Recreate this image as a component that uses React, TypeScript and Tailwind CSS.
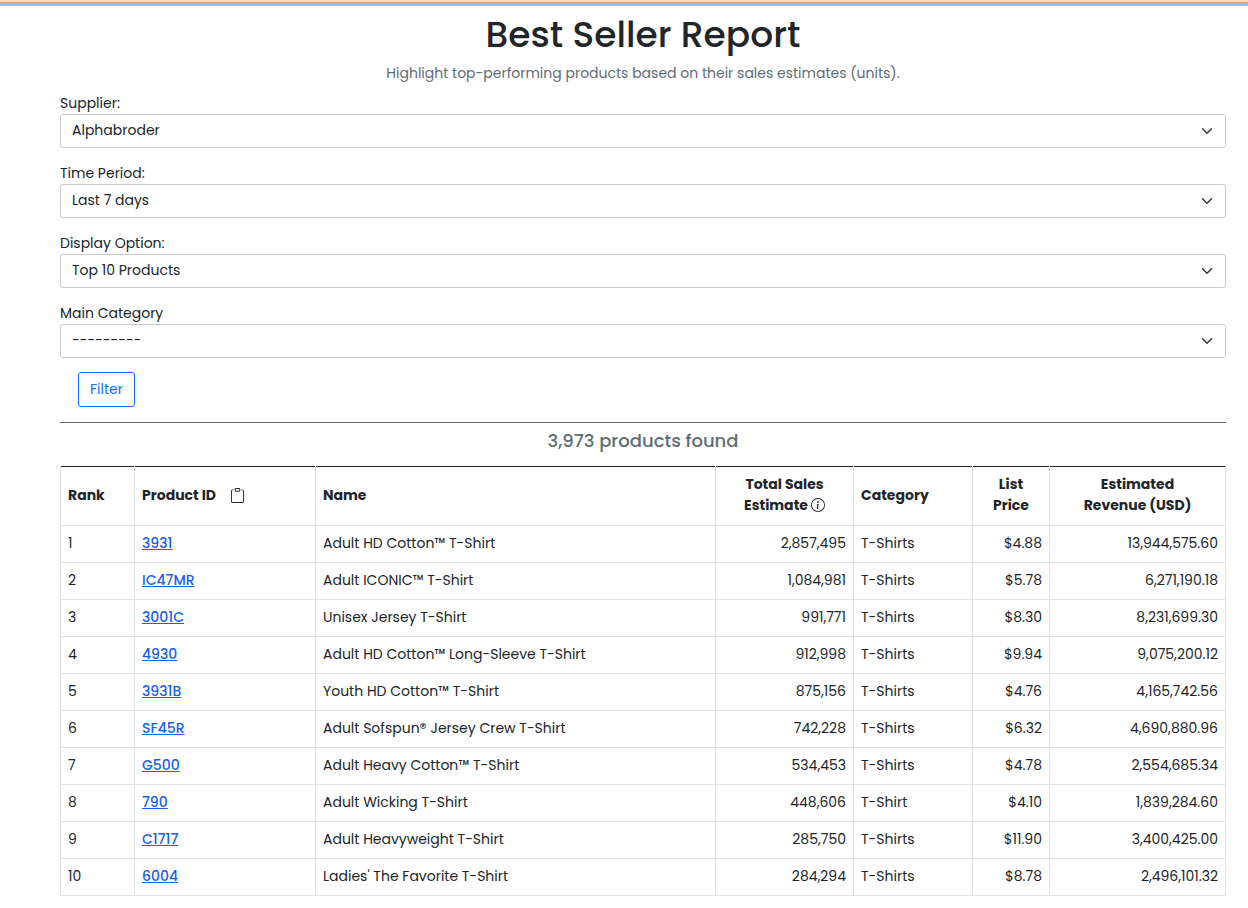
import { useState } from "react";
import { BsClipboard, BsInfoCircle } from "react-icons/bs";

interface Field {
  id: string;
  label: string;
  options: string[];
}

interface Product {
  id: string;
  name: string;
  sales: string;
  category: string;
  price: string;
  revenue: string;
}

const fields: Field[] = [
  { id: "supplier", label: "Supplier:", options: ["Alphabroder"] },
  { id: "period", label: "Time Period:", options: ["Last 7 days"] },
  { id: "display", label: "Display Option:", options: ["Top 10 Products"] },
  { id: "category", label: "Main Category", options: ["---------"] },
];

const products: Product[] = [
  { id: "3931", name: "Adult HD Cotton™ T-Shirt", sales: "2,857,495", category: "T-Shirts", price: "$4.88", revenue: "13,944,575.60" },
  { id: "IC47MR", name: "Adult ICONIC™ T-Shirt", sales: "1,084,981", category: "T-Shirts", price: "$5.78", revenue: "6,271,190.18" },
  { id: "3001C", name: "Unisex Jersey T-Shirt", sales: "991,771", category: "T-Shirts", price: "$8.30", revenue: "8,231,699.30" },
  { id: "4930", name: "Adult HD Cotton™ Long-Sleeve T-Shirt", sales: "912,998", category: "T-Shirts", price: "$9.94", revenue: "9,075,200.12" },
  { id: "3931B", name: "Youth HD Cotton™ T-Shirt", sales: "875,156", category: "T-Shirts", price: "$4.76", revenue: "4,165,742.56" },
  { id: "SF45R", name: "Adult Sofspun® Jersey Crew T-Shirt", sales: "742,228", category: "T-Shirts", price: "$6.32", revenue: "4,690,880.96" },
  { id: "G500", name: "Adult Heavy Cotton™ T-Shirt", sales: "534,453", category: "T-Shirts", price: "$4.78", revenue: "2,554,685.34" },
  { id: "790", name: "Adult Wicking T-Shirt", sales: "448,606", category: "T-Shirt", price: "$4.10", revenue: "1,839,284.60" },
  { id: "C1717", name: "Adult Heavyweight T-Shirt", sales: "285,750", category: "T-Shirts", price: "$11.90", revenue: "3,400,425.00" },
  { id: "6004", name: "Ladies' The Favorite T-Shirt", sales: "284,294", category: "T-Shirts", price: "$8.78", revenue: "2,496,101.32" },
];

const head = "border-x border-b border-[#dee2e6] px-[7px] pt-[7px] pb-[9px] font-bold";
const cell = "border border-[#dee2e6] px-[7px] pt-[7px] pb-2";

function SelectField({ field }: { field: Field }) {
  const [value, setValue] = useState(field.options[0]);
  return (
    <div className="mb-3.5">
      <label htmlFor={field.id} className="block leading-[22px]">
        {field.label}
      </label>
      <div className="grid items-center">
        <select
          id={field.id}
          value={value}
          onChange={(event) => setValue(event.target.value)}
          className="col-start-1 row-start-1 h-[34px] w-full appearance-none rounded-[3px] border border-[#c5ccd3] bg-white pr-8 pb-0.5 pl-[11px]"
        >
          {field.options.map((option) => (
            <option key={option}>{option}</option>
          ))}
        </select>
        <svg
          viewBox="0 0 16 16"
          aria-hidden="true"
          className="pointer-events-none col-start-1 row-start-1 mr-[13px] size-3 justify-self-end fill-none stroke-[#343a40] stroke-2"
        >
          <path strokeLinecap="round" strokeLinejoin="round" d="m2 5 6 6 6-6" />
        </svg>
      </div>
    </div>
  );
}

export default function App() {
  return (
    <div className="bg-white font-[Poppins,Inter,sans-serif] text-sm text-[#212529]">
      <div className="h-[3px] border-b border-[#c9a98c] bg-[#ffd8b1]" />
      <div className="h-[3px] bg-[#86c5f9]" />
      <main className="pr-[22px] pb-3 pl-[60px]">
        <h1 className="pt-1.5 text-center text-4xl leading-[46px] font-medium">Best Seller Report</h1>
        <p className="pt-[5px] text-center leading-[21px] text-[#606c74]">
          Highlight top-performing products based on their sales estimates (units).
        </p>
        <form className="pt-2" onSubmit={(event) => event.preventDefault()}>
          {fields.map((field) => (
            <SelectField key={field.id} field={field} />
          ))}
          <button
            type="submit"
            className="ml-[18px] block h-[35px] rounded-[3px] border border-[#0d6efd] px-[11px] pb-0.5 text-[#0d6efd]"
          >
            Filter
          </button>
        </form>
        <hr className="mt-[15px] border-[#60696f]" />
        <h2 className="pt-[7px] pb-3.5 text-center text-lg leading-[22px] font-medium text-[#606c74]">3,973 products found</h2>
        <table className="w-full table-fixed border-collapse">
          <colgroup>
            <col className="w-[74px]" />
            <col className="w-[181px]" />
            <col />
            <col className="w-[138px]" />
            <col className="w-[119px]" />
            <col className="w-[77px]" />
            <col className="w-[176px]" />
          </colgroup>
          <thead>
            <tr className="border-t border-t-[#212529] text-left leading-[21px]">
              <th className={head}>Rank</th>
              <th className={head}>
                <div className="flex items-center gap-3.5">
                  Product ID
                  <button type="button" aria-label="Copy product IDs">
                    <BsClipboard className="size-[15px]" />
                  </button>
                </div>
              </th>
              <th className={head}>Name</th>
              <th className={`${head} text-center`}>
                Total Sales
                <br />
                Estimate <BsInfoCircle className="inline size-3.5 align-[-2px]" />
              </th>
              <th className={head}>Category</th>
              <th className={`${head} text-center`}>
                List
                <br />
                Price
              </th>
              <th className={`${head} text-center`}>
                Estimated
                <br />
                Revenue (USD)
              </th>
            </tr>
          </thead>
          <tbody className="leading-[21px]">
            {products.map((product, index) => (
              <tr key={product.id}>
                <td className={cell}>{index + 1}</td>
                <td className={cell}>
                  <a href={`#${product.id}`} className="font-medium text-[#1a5fe8] underline">
                    {product.id}
                  </a>
                </td>
                <td className={cell}>{product.name}</td>
                <td className={`${cell} text-right`}>{product.sales}</td>
                <td className={cell}>{product.category}</td>
                <td className={`${cell} text-right`}>{product.price}</td>
                <td className={`${cell} text-right`}>{product.revenue}</td>
              </tr>
            ))}
          </tbody>
        </table>
      </main>
    </div>
  );
}
